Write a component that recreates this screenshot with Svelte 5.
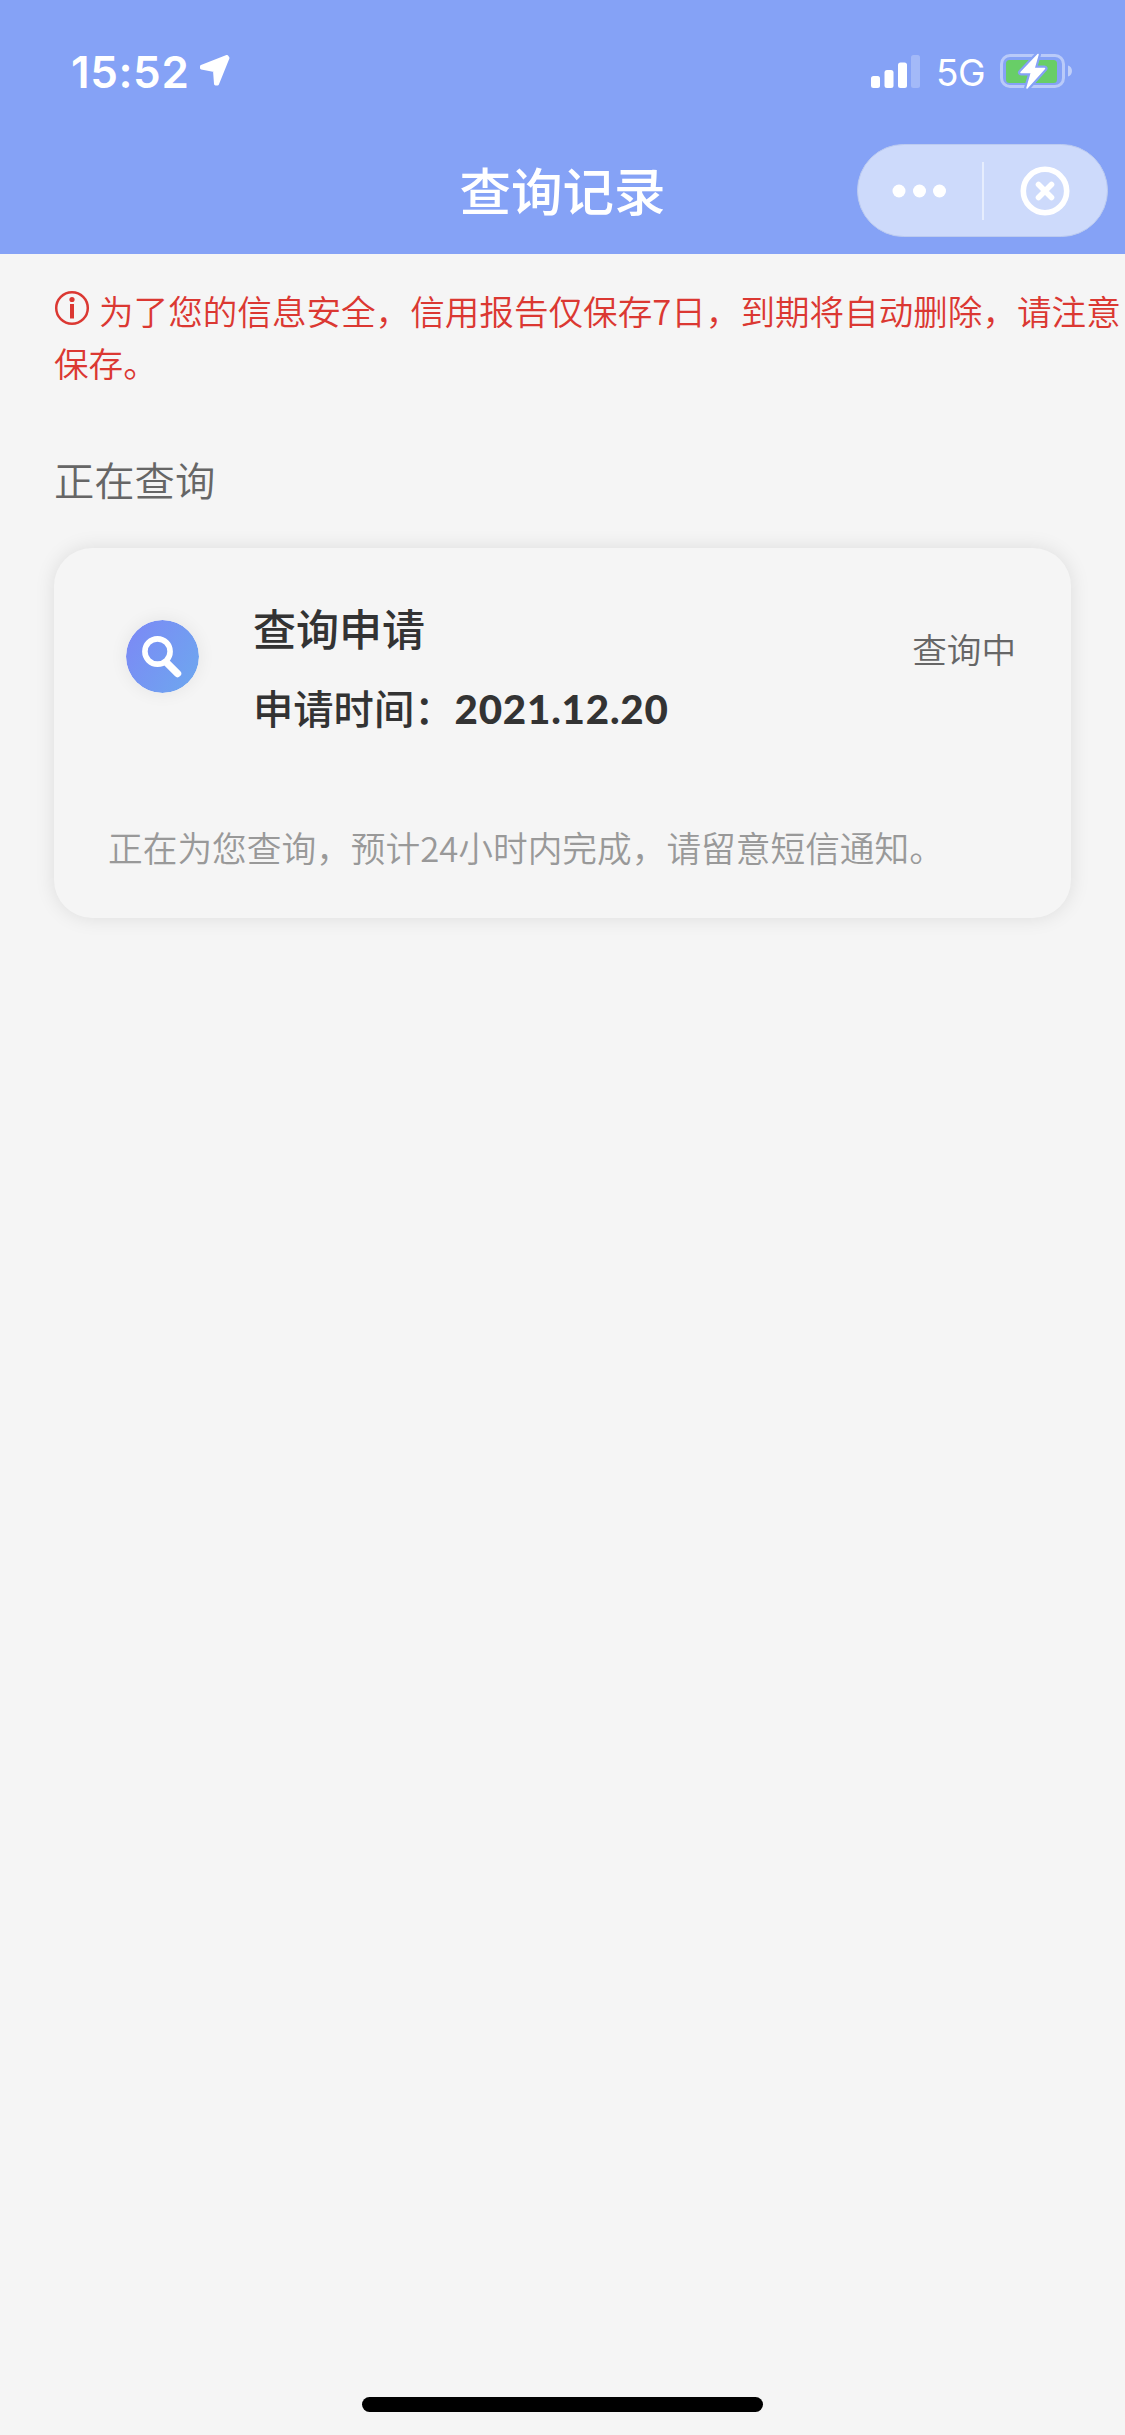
<script lang="ts">
	interface QueryRecord {
		title: string;
		date: string;
		status: string;
		message: string;
	}

	const time: string = '15:52';
	const notice: string = '为了您的信息安全，信用报告仅保存7日，到期将自动删除，请注意保存。';

	const records: QueryRecord[] = [
		{
			title: '查询申请',
			date: '2021.12.20',
			status: '查询中',
			message: '正在为您查询，预计24小时内完成，请留意短信通知。'
		}
	];
</script>

<div class="page">
	<header>
		<div class="status-bar">
			<div class="clock">
				<span class="time">{time}</span>
				<svg class="location" width="32" height="34" viewBox="0 0 32 34">
					<path d="M28 2.5 2.500 12.500v1.500l13 2.500 1 13.500h2L29 4Z" fill="#fff" stroke="#fff" stroke-width="3" stroke-linejoin="round" />
				</svg>
			</div>
			<div class="signals">
				<svg width="50" height="34" viewBox="0 0 50 34">
					<rect x="0" y="21" width="9" height="12" rx="2.5" fill="#fff" />
					<rect x="13.5" y="15" width="9" height="18" rx="2.5" fill="#fff" />
					<rect x="27" y="7.5" width="9" height="25.5" rx="2.5" fill="#fff" />
					<rect x="40" y="0" width="9" height="33" rx="2.5" fill="#fff" opacity="0.25" />
				</svg>
				<span class="network">5G</span>
				<svg width="74" height="40" viewBox="0 0 74 40">
					<rect x="1.5" y="3.5" width="62" height="31" rx="8.5" fill="none" stroke="#b9caf9" stroke-width="3" />
					<path d="M68 13.5v11c2.5-.8 4-2.9 4-5.5s-1.5-4.7-4-5.5Z" fill="#c0cff9" />
					<rect x="6" y="8" width="51" height="23" rx="3.5" fill="#68ce67" />
					<path
						d="M38 2.5 21 20.500h10.500L27 36 44.500 16.500H34Z"
						fill="#fff"
						stroke="#85a2f6"
						stroke-width="6"
						stroke-linejoin="round"
						paint-order="stroke"
					/>
					<path d="M38 2.5 21 20.500h10.500L27 36 44.500 16.500H34Z" fill="#fff" stroke="#fff" stroke-width="1.5" stroke-linejoin="round" />
				</svg>
			</div>
		</div>

		<div class="nav-bar">
			<h1>查询记录</h1>
			<div class="capsule">
				<button aria-label="更多">
					<svg width="56" height="16" viewBox="0 0 56 16" fill="#fff">
						<circle cx="7" cy="8" r="6.5" />
						<circle cx="27.5" cy="8" r="6.5" />
						<circle cx="47.5" cy="8" r="6.5" />
					</svg>
				</button>
				<span class="divider"></span>
				<button aria-label="关闭">
					<svg width="50" height="50" viewBox="0 0 50 50" fill="none" stroke="#fff">
						<circle cx="25" cy="25" r="21.7" stroke-width="5.6" />
						<path d="m18.500 18.500 13 13m0-13-13 13" stroke-width="5.6" stroke-linecap="round" />
					</svg>
				</button>
			</div>
		</div>
	</header>

	<main>
		<p class="notice">
			<svg width="36" height="36" viewBox="0 0 36 36">
				<circle cx="18" cy="18" r="15.8" fill="none" stroke="#db3832" stroke-width="2.5" />
				<circle cx="18" cy="9.5" r="2.6" fill="#db3832" />
				<path d="M18 14v14.500" stroke="#db3832" stroke-width="4" />
			</svg>{notice}
		</p>

		<h2>正在查询</h2>

		{#each records as record}
			<section class="card">
				<div class="card-body">
					<svg class="card-icon" width="73" height="73" viewBox="0 0 73 73">
						<defs>
							<linearGradient id="search-bg" x1="0" y1="0.2" x2="1" y2="0.8">
								<stop offset="0" stop-color="#7b8af5" />
								<stop offset="1" stop-color="#6ea6ef" />
							</linearGradient>
						</defs>
						<circle cx="36.5" cy="36.5" r="36.5" fill="url(#search-bg)" />
						<circle cx="31.5" cy="31.5" r="12.6" fill="none" stroke="#fff" stroke-width="5.6" />
						<path d="m41 43 10.500 10.500" stroke="#fff" stroke-width="7.4" stroke-linecap="round" />
					</svg>
					<div class="info">
						<h3>{record.title}</h3>
						<div class="date">申请时间：<span>{record.date}</span></div>
					</div>
					<span class="state">{record.status}</span>
				</div>
				<p class="message">{record.message}</p>
			</section>
		{/each}
	</main>

	<div class="home-indicator"></div>
</div>

<style>
	:global(body) {
		background: #f5f5f5;
	}

	.page {
		display: flex;
		flex-direction: column;
		box-sizing: border-box;
		width: 1125px;
		height: 2435px;
		background: #f5f5f5;
		font-family: 'Noto Sans CJK SC', sans-serif;
		overflow: hidden;
	}

	header {
		height: 254px;
		flex: none;
		background: #85a2f6;
		color: #fff;
	}

	.status-bar {
		display: flex;
		justify-content: space-between;
		align-items: center;
		box-sizing: border-box;
		height: 144px;
		padding: 0 51px 0 71px;
	}

	.clock,
	.signals {
		display: flex;
		align-items: center;
	}

	.time {
		font: 600 44px/50px Inter, sans-serif;
		letter-spacing: 0.6px;
	}

	.location {
		margin: -2px 0 0 10px;
	}

	.network {
		margin: 2px 15px 0 15px;
		font: 400 37px/44px Inter, sans-serif;
		letter-spacing: -0.5px;
	}

	.nav-bar {
		display: grid;
		grid-template-columns: 1fr auto 1fr;
		align-items: center;
		height: 93px;
		padding-right: 17px;
	}

	h1 {
		grid-column: 2;
		margin: 0 0 4px 17px;
		font-size: 51.5px;
		font-weight: 500;
		line-height: 70px;
	}

	.capsule {
		display: flex;
		align-items: center;
		justify-self: end;
		box-sizing: border-box;
		width: 251px;
		height: 93px;
		border: 1px solid #bccbf0;
		border-radius: 47px;
		background: #cddafb;
	}

	.capsule button {
		display: flex;
		flex: 1;
		align-items: center;
		justify-content: center;
		padding: 0;
		border: none;
		background: none;
	}

	.divider {
		width: 2px;
		height: 58px;
		background: #e6edfd;
	}

	main {
		flex: 1;
		padding: 30px 0 0 54px;
	}

	.notice {
		margin: 0;
		color: #db3832;
		font-size: 34.6px;
		font-weight: 350;
		line-height: 52px;
	}

	.notice svg {
		margin: -4px 9px 0 0;
		vertical-align: -1px;
	}

	h2 {
		margin: 61px 0 0;
		color: #666;
		font-size: 40.3px;
		font-weight: 350;
		line-height: 60px;
	}

	.card {
		box-sizing: border-box;
		width: 1017px;
		height: 370px;
		margin-top: 39px;
		padding: 49px 56px 0 54px;
		border-radius: 38px;
		background: #f5f5f5;
		box-shadow: 0 0 20px rgba(0, 0, 0, 0.1);
	}

	.card-body {
		display: flex;
		height: 224px;
	}

	.card-icon {
		margin: 23px 54px 0 18px;
		border-radius: 50%;
		box-shadow: 0 0 18px rgba(0, 0, 0, 0.07);
	}

	h3 {
		margin: 0;
		color: #333;
		font-size: 43px;
		font-weight: 500;
		line-height: 60px;
	}

	.date {
		margin-top: 20px;
		color: #333;
		font-size: 40.3px;
		font-weight: 500;
		line-height: 60px;
	}

	.date span {
		font-family: Lato, sans-serif;
		font-weight: 900;
		letter-spacing: 0.8px;
	}

	.state {
		margin: 26px -1px 0 auto;
		color: #666;
		font-size: 34.6px;
		font-weight: 350;
		line-height: 50px;
	}

	.message {
		margin: 0;
		color: #999;
		font-size: 34.7px;
		font-weight: 350;
		line-height: 52px;
	}

	.home-indicator {
		flex: none;
		width: 401px;
		height: 15px;
		margin: 0 auto 23px;
		border-radius: 8px;
		background: #000;
	}
</style>
